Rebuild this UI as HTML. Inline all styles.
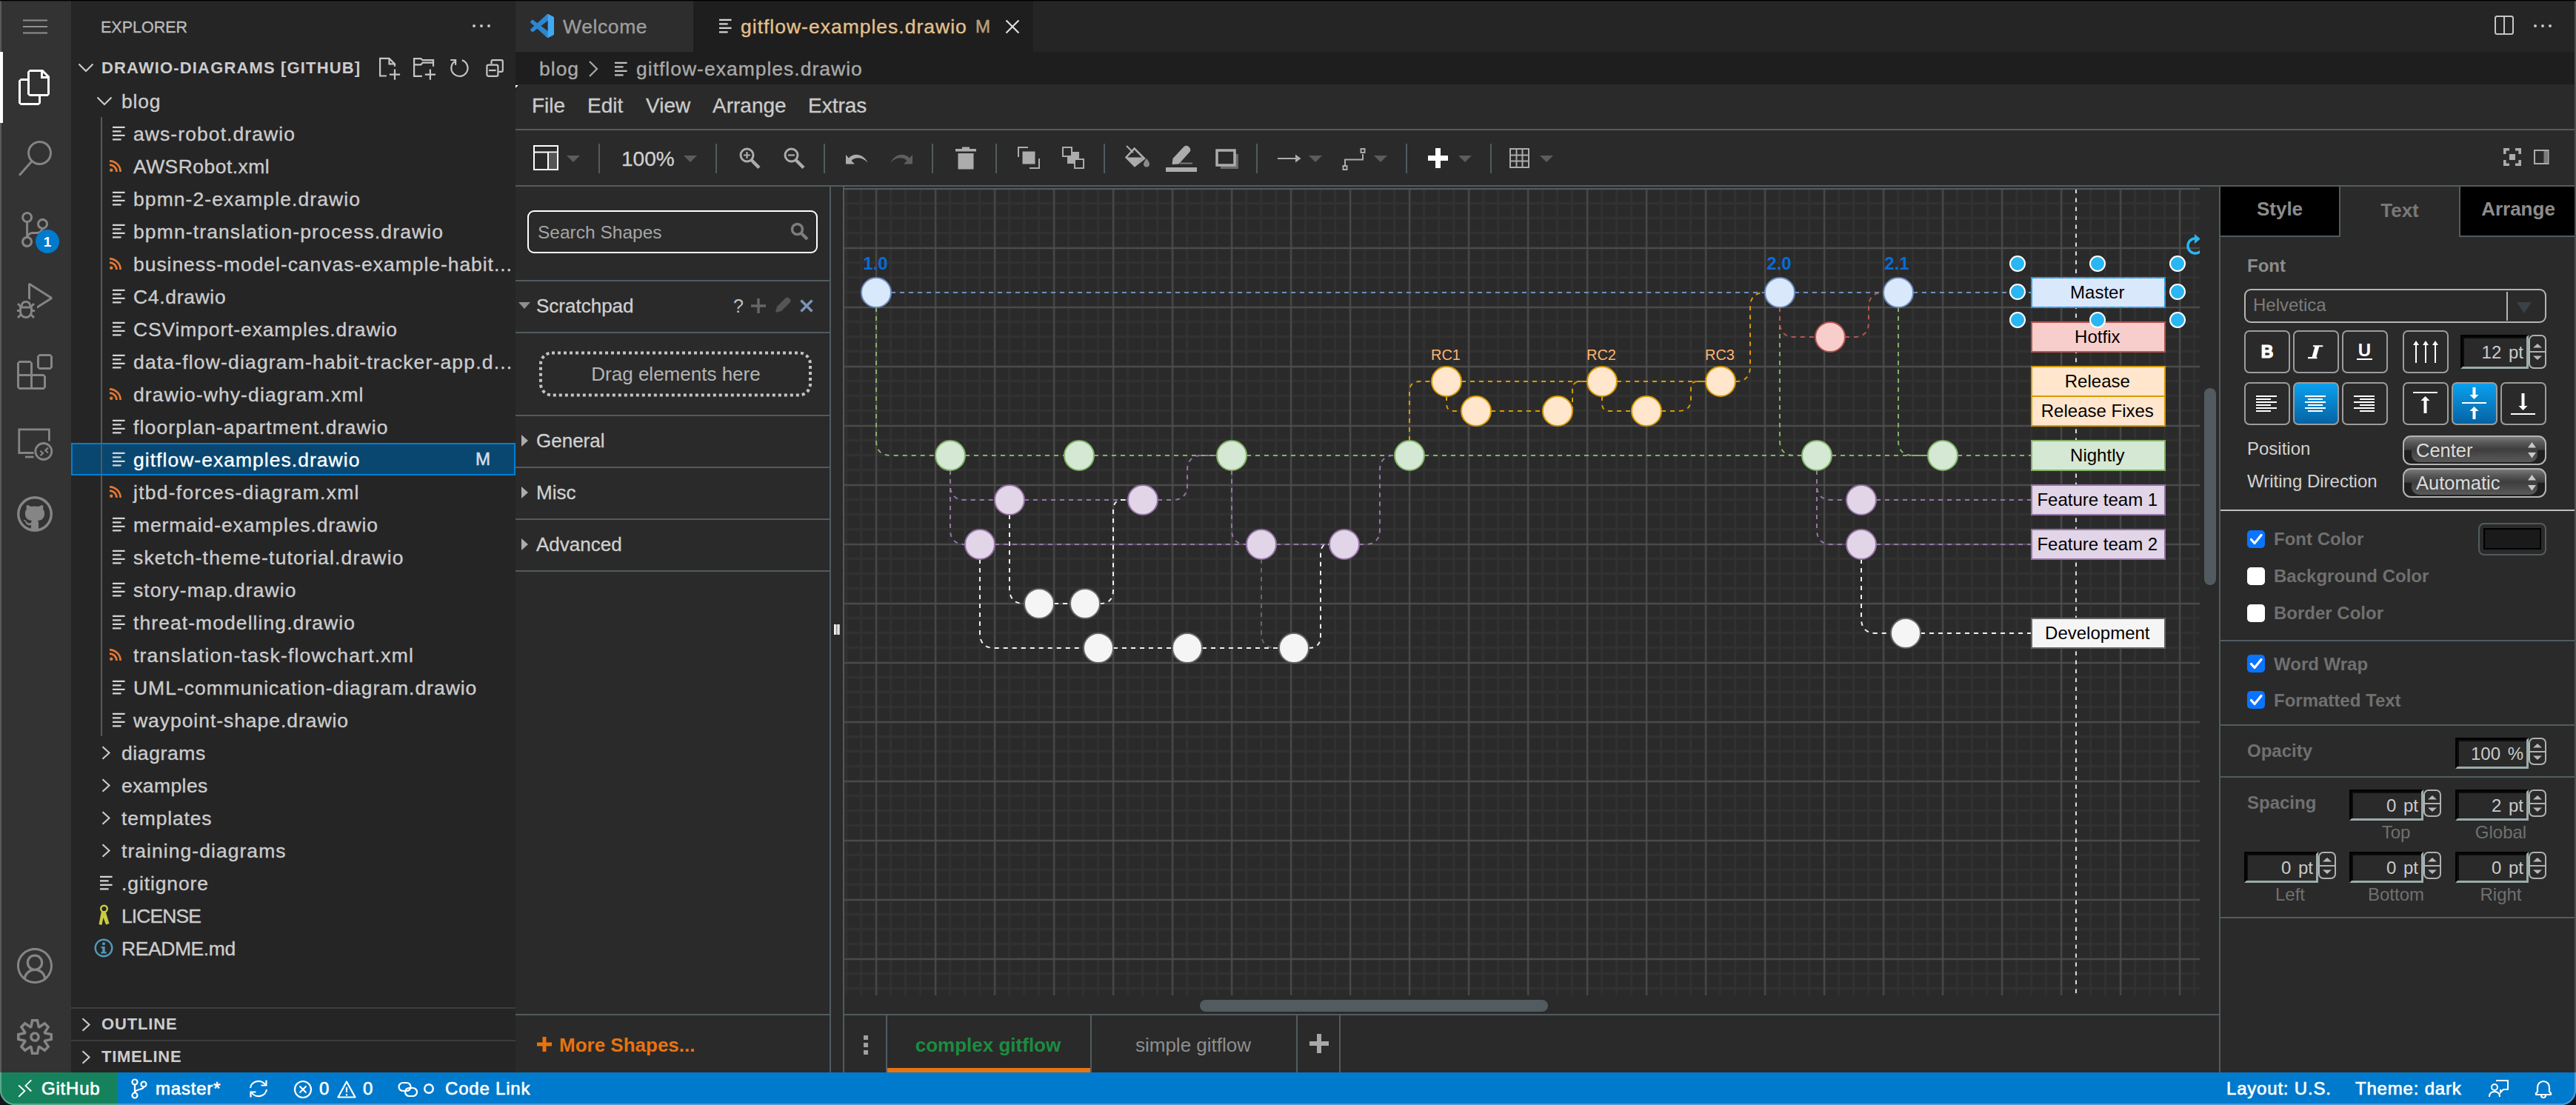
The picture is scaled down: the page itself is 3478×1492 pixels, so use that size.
<!DOCTYPE html><html><head><meta charset="utf-8"><title>drawio-diagrams</title><style>
*{box-sizing:border-box;margin:0;padding:0}
html,body{width:3478px;height:1492px;overflow:hidden;background:#1e1e1e}
body{font-family:"Liberation Sans",sans-serif;position:relative;color:#ccc}
.a{position:absolute}
.t{position:absolute;white-space:pre;line-height:1}
svg{position:absolute;overflow:visible}
/* vscode */
#act{left:0;top:0;width:96px;height:1448px;background:#333333}
#side{left:96px;top:0;width:600px;height:1448px;background:#252526}
#tabs{left:696px;top:0;width:2782px;height:70px;background:#252526}
#bc{left:696px;top:70px;width:2782px;height:44px;background:#1e1e1e}
#dio{left:696px;top:114px;width:2782px;height:1334px;background:#2a2a2a}
#status{left:0;top:1448px;width:3478px;height:44px;background:#007acc}
.row{position:absolute;left:96px;width:600px;height:44px}
.fn{position:absolute;white-space:pre;font-size:26.5px;letter-spacing:1px;color:#cccccc;line-height:44px;top:0;-webkit-text-stroke:0.35px}
.vs{-webkit-text-stroke:0.35px}
.hl{position:absolute;background:#4a5458}
.fl{position:absolute;white-space:pre;line-height:1;font-size:24px;font-weight:700;color:#8c8c8c}
.inp{position:absolute;background:#2a2a2a;border:3px solid #000;border-top-color:#020202;border-left-color:#020202;border-bottom-color:#9aabab;border-right-color:#9aabab;box-shadow:inset 2px 2px 0 #0c0c0c;color:#cacaca;font-size:24px;line-height:41px;text-align:right;padding-right:4px;white-space:pre}
.spin{position:absolute;border:2px solid #b0b0b0;border-radius:7px;background:#2a2a2a}
.btn{position:absolute;border:2px solid #9c9c9c;border-radius:7px;background:#2a2a2a}
.btn.on{background:linear-gradient(#0aa0ee,#0563a3)}
.sel{position:absolute;border:2px solid #b4b4b4;border-radius:11px;background:linear-gradient(#7a7a7a 0%,#5a5a5a 20%,#3c3c3c 48%,#1e1e1e 50%,#202020 100%);color:#dcdcdc;font-size:25.5px;line-height:36px;padding-left:16px;white-space:pre;overflow:hidden}
.sel:before{content:"";position:absolute;left:10px;right:10px;top:17px;height:17px;border-radius:0 0 10px 10px;background:linear-gradient(#3e3e3e,#5a5a5a)}
.sel span{position:relative}
.cb{position:absolute;width:24px;height:24px;border-radius:5px}
.cb.on{background:#0a74ff}
.cb.off{background:#fff}
</style></head><body>
<div class="a" id="act"></div><div class="a" id="side"></div><div class="a" id="tabs"></div><div class="a" id="bc"></div><div class="a" id="dio"></div><div class="a" id="status"></div>
<div class="a" style="left:0;top:0;width:2px;height:1492px;background:#5a5a5a"></div>
<svg style="left:31px;top:26px" width="34" height="20"><path d="M0 1.5H33M0 10H33M0 18.5H33" stroke="#909090" stroke-width="2"/></svg>
<div class="a" style="left:0;top:70px;width:4px;height:96px;background:#fff"></div>
<svg style="left:22.7px;top:94.0px" width="48" height="48" viewBox="0 0 24 24"><path d="M17.5 0h-9L7 1.5V6H2.5L1 7.5v15.07L2.5 24h12.07L16 22.57V18h4.7l1.3-1.43V4.5L17.5 0zm0 2.12l2.38 2.38H17.5V2.12zm-3 20.38h-12v-15H7v9.07L8.5 18h6v4.5zm6-6h-12v-15H16V6h4.5v10.5z" fill="#ffffff"/></svg>
<svg style="left:22.7px;top:190.0px" width="48" height="48" viewBox="0 0 24 24"><path d="M15.25 0a8.25 8.25 0 0 0-6.18 13.72L1 22.88l1.12 1 8.05-9.12A8.251 8.251 0 1 0 15.25.01V0zm0 15a6.75 6.75 0 1 1 0-13.5 6.75 6.75 0 0 1 0 13.5z" fill="#858585"/></svg>
<svg style="left:22.7px;top:286.0px" width="48" height="48" viewBox="0 0 24 24"><path d="M21.007 8.222A3.738 3.738 0 0 0 15.045 5.2a3.737 3.737 0 0 0 1.156 6.583 2.988 2.988 0 0 1-2.668 1.67h-2.99a4.456 4.456 0 0 0-2.989 1.165V7.4a3.737 3.737 0 1 0-1.494 0v9.117a3.776 3.776 0 1 0 1.816.099 2.99 2.99 0 0 1 2.668-1.667h2.99a4.484 4.484 0 0 0 4.223-3.039 3.736 3.736 0 0 0 3.25-3.687zM4.565 3.738a2.242 2.242 0 1 1 4.484 0 2.242 2.242 0 0 1-4.484 0zm4.484 16.441a2.242 2.242 0 1 1-4.484 0 2.242 2.242 0 0 1 4.484 0zm8.221-9.715a2.242 2.242 0 1 1 0-4.485 2.242 2.242 0 0 1 0 4.485z" fill="#858585"/></svg>
<svg style="left:22.7px;top:382.0px" width="48" height="48" viewBox="0 0 24 24"><path d="M10.94 13.5l-1.32 1.32a3.73 3.73 0 0 0-7.24 0L1.06 13.5 0 14.56l1.72 1.72-.22.22V18H0v1.5h1.5v.08c.077.489.214.966.41 1.42L0 22.94 1.06 24l1.65-1.65A4.308 4.308 0 0 0 6 24a4.31 4.31 0 0 0 3.29-1.65L10.94 24 12 22.94 10.09 21c.198-.464.336-.951.41-1.45v-.1H12V18h-1.5v-1.5l-.22-.22L12 14.56l-1.06-1.06zM6 13.5a2.25 2.25 0 0 1 2.25 2.25h-4.5A2.25 2.25 0 0 1 6 13.5zm3 6a3.33 3.33 0 0 1-3 3 3.33 3.33 0 0 1-3-3v-2.25h6v2.25zm14.76-9.9v1.26L13.5 17.37V15.6l8.5-5.37L9 2v9.46a5.07 5.07 0 0 0-1.5-.72V.63L8.64 0l15.12 9.6z" fill="#858585"/></svg>
<svg style="left:22.7px;top:478.0px" width="48" height="48" viewBox="0 0 24 24"><path d="M13.5 1.5L15 0h7.5L24 1.5V9l-1.5 1.5H15L13.5 9V1.5zm1.5 0V9h7.5V1.5H15zM0 15V6l1.5-1.5H9L10.5 6v7.5H18l1.5 1.5v7.5L18 24H1.5L0 22.5V15zm9-1.5V6H1.5v7.5H9zM9 15H1.5v7.5H9V15zm1.5 7.5H18V15h-7.5v7.5z" fill="#858585"/></svg>
<svg style="left:22.700px;top:574px" width="48" height="48" viewBox="0 0 48 48" fill="none" stroke="#858585" stroke-width="2.800"><path d="M22.500 37.500H2.800V5.800H43.400V21.500"/><path d="M11 43H22.500"/><circle cx="35.800" cy="35.500" r="11"/><path d="M31.500 34.800L35 38L31.500 41.200M42 30.600L38.200 34L42 37.400" stroke-width="2.200"/></svg>
<svg style="left:22.7px;top:670.0px" width="48" height="48" viewBox="0 0 24 24"><path d="M12 0a12 12 0 1 0 0 24 12 12 0 0 0 0-24zm3.163 21.783h-.093a.513.513 0 0 1-.382-.14.513.513 0 0 1-.14-.372v-1.406c.006-.467.01-.94.01-1.416a3.693 3.693 0 0 0-.151-1.028 1.832 1.832 0 0 0-.542-.875 8.014 8.014 0 0 0 2.038-.471 4.051 4.051 0 0 0 1.466-.964c.407-.427.71-.943.885-1.506a6.77 6.77 0 0 0 .3-2.13 4.138 4.138 0 0 0-.26-1.476 3.892 3.892 0 0 0-.795-1.284 2.81 2.81 0 0 0 .162-.582c.033-.2.05-.402.05-.604 0-.26-.03-.52-.09-.773a5.309 5.309 0 0 0-.221-.763.293.293 0 0 0-.111-.02h-.11c-.23.002-.456.04-.674.111a5.34 5.34 0 0 0-.703.26 6.503 6.503 0 0 0-.661.343c-.215.127-.405.249-.573.362a9.578 9.578 0 0 0-5.143 0 13.507 13.507 0 0 0-.572-.362 6.022 6.022 0 0 0-.672-.342 4.516 4.516 0 0 0-.705-.261 2.203 2.203 0 0 0-.662-.111h-.11a.29.29 0 0 0-.11.02 5.844 5.844 0 0 0-.23.763c-.054.254-.08.513-.081.773 0 .202.017.404.051.604.033.199.086.394.16.582A3.888 3.888 0 0 0 5.702 10a4.142 4.142 0 0 0-.263 1.476 6.871 6.871 0 0 0 .292 2.12c.181.563.483 1.08.884 1.516.415.422.915.75 1.466.964.653.25 1.337.41 2.033.476a1.828 1.828 0 0 0-.452.633 2.99 2.99 0 0 0-.2.744 2.754 2.754 0 0 1-1.175.27 1.788 1.788 0 0 1-1.065-.3 2.904 2.904 0 0 1-.752-.824 3.1 3.1 0 0 0-.292-.382 2.693 2.693 0 0 0-.372-.343 1.841 1.841 0 0 0-.432-.24 1.2 1.2 0 0 0-.481-.101c-.04.001-.08.005-.12.01a.649.649 0 0 0-.162.02.408.408 0 0 0-.13.06.116.116 0 0 0-.06.1.33.33 0 0 0 .14.242c.093.074.17.131.232.171l.03.021c.133.103.261.214.382.333.112.098.213.209.3.33.09.119.168.246.231.381.073.134.15.288.231.463.188.474.522.875.954 1.145.453.243.961.364 1.476.351.174 0 .349-.01.522-.03.172-.028.343-.057.515-.091v1.743a.5.5 0 0 1-.533.521h-.062a10.286 10.286 0 1 1 6.324 0v.005z" fill="#858585"/></svg>
<svg style="left:22.7px;top:1280.0px" width="48" height="48" viewBox="0 0 16 16"><path d="M16 7.992C16 3.58 12.416 0 8 0S0 3.58 0 7.992c0 2.43 1.104 4.62 2.832 6.09.016.016.032.016.032.032.144.112.288.224.448.336.08.048.144.111.224.175A7.98 7.98 0 0 0 8.016 16a7.98 7.98 0 0 0 4.48-1.375c.08-.048.144-.111.224-.16.144-.111.304-.223.448-.335.016-.016.032-.016.032-.032 1.696-1.487 2.8-3.676 2.8-6.106zm-8 7.001c-1.504 0-2.88-.48-4.016-1.279.016-.128.048-.255.08-.383a4.17 4.17 0 0 1 .416-.991c.176-.304.384-.576.64-.816.24-.24.528-.463.816-.639.304-.176.624-.304.976-.4A4.15 4.15 0 0 1 8 10.342a4.185 4.185 0 0 1 2.928 1.166c.368.368.656.8.864 1.295.112.288.192.592.24.911A7.03 7.03 0 0 1 8 14.993zm-2.448-7.4a2.49 2.49 0 0 1-.208-1.024c0-.351.064-.703.208-1.023.144-.32.336-.607.576-.847.24-.24.528-.431.848-.575.32-.144.672-.208 1.024-.208.368 0 .704.064 1.024.208.32.144.608.336.848.575.24.24.432.528.576.847.144.32.208.672.208 1.023 0 .368-.064.704-.208 1.023a2.84 2.84 0 0 1-.576.848 2.84 2.84 0 0 1-.848.575 2.715 2.715 0 0 1-2.064 0 2.84 2.84 0 0 1-.848-.575 2.526 2.526 0 0 1-.56-.848zm7.424 5.306c0-.032-.016-.048-.016-.08a5.22 5.22 0 0 0-.688-1.406 4.883 4.883 0 0 0-1.088-1.135 5.207 5.207 0 0 0-1.04-.608 2.82 2.82 0 0 0 .464-.383 4.2 4.2 0 0 0 .624-.784 3.624 3.624 0 0 0 .528-1.934 3.71 3.71 0 0 0-.288-1.47 3.799 3.799 0 0 0-.816-1.199 3.845 3.845 0 0 0-1.2-.8 3.72 3.72 0 0 0-1.472-.287 3.72 3.72 0 0 0-1.472.288 3.631 3.631 0 0 0-1.2.815 3.84 3.84 0 0 0-.8 1.199 3.71 3.71 0 0 0-.288 1.47c0 .352.048.688.144 1.007.096.336.224.64.4.927.16.288.384.544.624.784.144.144.304.271.48.383a5.12 5.12 0 0 0-1.04.624c-.416.32-.784.703-1.088 1.119a4.999 4.999 0 0 0-.688 1.406c-.016.032-.016.064-.016.08C1.776 11.636.992 9.91.992 7.992.992 4.14 4.144.991 8 .991s7.008 3.149 7.008 7.001a6.96 6.96 0 0 1-2.032 4.907z" fill="#858585"/></svg>
<svg style="left:22.7px;top:1376.0px" width="48" height="48" viewBox="0 0 24 24"><path d="M19.85 8.75l4.15.83v4.84l-4.15.83 2.35 3.52-3.43 3.43-3.52-2.35-.83 4.15H9.58l-.83-4.15-3.52 2.35-3.43-3.43 2.35-3.52L0 14.42V9.58l4.15-.83L1.8 5.23 5.23 1.8l3.52 2.35L9.58 0h4.84l.83 4.15 3.52-2.35 3.43 3.43-2.35 3.52zm-1.57 5.07l4-.81v-2l-4-.81-.54-1.3 2.29-3.43-1.43-1.43-3.43 2.29-1.3-.54-.81-4h-2l-.81 4-1.3.54-3.43-2.29-1.43 1.43L6.38 8.9l-.54 1.3-4 .81v2l4 .81.54 1.3-2.29 3.43 1.43 1.43 3.43-2.29 1.3.54.81 4h2l.81-4 1.3-.54 3.43 2.29 1.43-1.43-2.29-3.43.54-1.3zm-8.186-4.672A3.43 3.43 0 0 1 12 8.57 3.44 3.44 0 0 1 15.43 12a3.43 3.43 0 1 1-5.336-2.852zm.956 4.274c.281.188.612.288.95.288A1.7 1.7 0 0 0 13.71 12a1.71 1.71 0 1 0-2.66 1.422z" fill="#858585"/></svg>
<div class="a" style="left:48px;top:310px;width:32px;height:32px;border-radius:16px;background:#007acc"></div>
<div class="t" style="left:48px;top:317px;width:32px;text-align:center;font-size:19px;font-weight:700;color:#fff">1</div>
<div class="t vs" style="left:136px;top:26.500px;font-size:21.500px;color:#bbbbbb;letter-spacing:0px">EXPLORER</div>
<svg style="left:637px;top:32px" width="26" height="6"><circle cx="3" cy="3" r="2" fill="#c5c5c5"/><circle cx="13" cy="3" r="2" fill="#c5c5c5"/><circle cx="23" cy="3" r="2" fill="#c5c5c5"/></svg>
<svg style="left:105px;top:85px" width="22" height="13" viewBox="0 0 22 13"><path d="M1.500 1.500L11 11L20.500 1.500" stroke="#cccccc" stroke-width="2.100" fill="none"/></svg>
<div class="t" style="left:137px;top:81px;font-size:22px;font-weight:700;color:#cccccc;letter-spacing:1.15px">DRAWIO-DIAGRAMS [GITHUB]</div>
<svg style="left:511px;top:76px" width="32" height="34" fill="none" stroke="#c5c5c5" stroke-width="2.200"><path d="M10.800 26.500H2.100V2.900H14.500L22 10.400V13.700"/><path d="M14.500 2.900V10.400H22"/><path d="M22 17.600V31.800M14.900 24.700H29.100"/></svg>
<svg style="left:557px;top:76px" width="34" height="34" fill="none" stroke="#c5c5c5" stroke-width="2.200"><path d="M12.900 26.900H2.100V3.200H11.200L13.600 5.100H28V13.700"/><path d="M2.100 11.400H11.200L13.600 8.700H27"/><path d="M23.900 17.600V31.800M16.800 24.700H31"/></svg>
<svg style="left:606px;top:76px" width="30" height="32" fill="none" stroke="#c5c5c5" stroke-width="2.200"><path d="M17.800 5.300A11.100 11.100 0 1 1 8 6.800"/><path d="M2.200 5H9.100V11.700"/></svg>
<svg style="left:654px;top:78px" width="28" height="28" fill="none" stroke="#c5c5c5" stroke-width="2.200"><path d="M9.500 8.500V5Q9.500 3.100 11.400 3.100H22.900Q24.800 3.100 24.800 5V16.900Q24.800 18.800 22.900 18.800H19.400"/><rect x="3.400" y="9.600" width="15" height="15.300" rx="2.200"/><path d="M6 17H15.700"/></svg>
<svg style="left:130px;top:130px" width="22" height="13" viewBox="0 0 22 13"><path d="M1.500 1.500L11 11L20.500 1.500" stroke="#cccccc" stroke-width="2.100" fill="none"/></svg>
<div class="fn" style="left:164px;top:115px;color:#cccccc;letter-spacing:0.83px">blog</div>
<div class="a" style="left:136px;top:158px;width:2px;height:836px;background:#585858"></div>
<svg style="left:151.5px;top:170px" width="18" height="20" viewBox="0 0 18 20"><path d="M0 1.800H16.600M0 7.300H11.600M0 12.800H16.600M0 18.300H11.600" stroke="#d4d4d4" stroke-width="2.200" fill="none"/></svg>
<div class="fn" style="left:180px;top:159px;color:#cccccc;letter-spacing:1.08px">aws-robot.drawio</div>
<svg style="left:148px;top:216px" width="16" height="16" viewBox="0 0 20 20"><circle cx="2.8" cy="17.2" r="2.8" fill="#e37933"/><path d="M0 8.2A11.8 11.8 0 0 1 11.8 20" stroke="#e37933" stroke-width="3.4" fill="none"/><path d="M0 1.7A18.3 18.3 0 0 1 18.3 20" stroke="#e37933" stroke-width="3.4" fill="none"/></svg>
<div class="fn" style="left:180px;top:203px;color:#cccccc;letter-spacing:0.46px">AWSRobot.xml</div>
<svg style="left:151.5px;top:258px" width="18" height="20" viewBox="0 0 18 20"><path d="M0 1.800H16.600M0 7.300H11.600M0 12.800H16.600M0 18.300H11.600" stroke="#d4d4d4" stroke-width="2.200" fill="none"/></svg>
<div class="fn" style="left:180px;top:247px;color:#cccccc;letter-spacing:1.08px">bpmn-2-example.drawio</div>
<svg style="left:151.5px;top:302px" width="18" height="20" viewBox="0 0 18 20"><path d="M0 1.800H16.600M0 7.300H11.600M0 12.800H16.600M0 18.300H11.600" stroke="#d4d4d4" stroke-width="2.200" fill="none"/></svg>
<div class="fn" style="left:180px;top:291px;color:#cccccc;letter-spacing:1.12px">bpmn-translation-process.drawio</div>
<svg style="left:148px;top:348px" width="16" height="16" viewBox="0 0 20 20"><circle cx="2.8" cy="17.2" r="2.8" fill="#e37933"/><path d="M0 8.2A11.8 11.8 0 0 1 11.8 20" stroke="#e37933" stroke-width="3.4" fill="none"/><path d="M0 1.7A18.3 18.3 0 0 1 18.3 20" stroke="#e37933" stroke-width="3.4" fill="none"/></svg>
<div class="fn" style="left:180px;top:335px;color:#cccccc;letter-spacing:0.95px">business-model-canvas-example-habit...</div>
<svg style="left:151.5px;top:390px" width="18" height="20" viewBox="0 0 18 20"><path d="M0 1.800H16.600M0 7.300H11.600M0 12.800H16.600M0 18.300H11.600" stroke="#d4d4d4" stroke-width="2.200" fill="none"/></svg>
<div class="fn" style="left:180px;top:379px;color:#cccccc;letter-spacing:0.67px">C4.drawio</div>
<svg style="left:151.5px;top:434px" width="18" height="20" viewBox="0 0 18 20"><path d="M0 1.800H16.600M0 7.300H11.600M0 12.800H16.600M0 18.300H11.600" stroke="#d4d4d4" stroke-width="2.200" fill="none"/></svg>
<div class="fn" style="left:180px;top:423px;color:#cccccc;letter-spacing:0.86px">CSVimport-examples.drawio</div>
<svg style="left:151.5px;top:478px" width="18" height="20" viewBox="0 0 18 20"><path d="M0 1.800H16.600M0 7.300H11.600M0 12.800H16.600M0 18.300H11.600" stroke="#d4d4d4" stroke-width="2.200" fill="none"/></svg>
<div class="fn" style="left:180px;top:467px;color:#cccccc;letter-spacing:1.17px">data<i></i>-flow-diagram-habit-tracker-app.d...</div>
<svg style="left:148px;top:524px" width="16" height="16" viewBox="0 0 20 20"><circle cx="2.8" cy="17.2" r="2.8" fill="#e37933"/><path d="M0 8.2A11.8 11.8 0 0 1 11.8 20" stroke="#e37933" stroke-width="3.4" fill="none"/><path d="M0 1.7A18.3 18.3 0 0 1 18.3 20" stroke="#e37933" stroke-width="3.4" fill="none"/></svg>
<div class="fn" style="left:180px;top:511px;color:#cccccc;letter-spacing:1.11px">drawio-why-diagram.xml</div>
<svg style="left:151.5px;top:566px" width="18" height="20" viewBox="0 0 18 20"><path d="M0 1.800H16.600M0 7.300H11.600M0 12.800H16.600M0 18.300H11.600" stroke="#d4d4d4" stroke-width="2.200" fill="none"/></svg>
<div class="fn" style="left:180px;top:555px;color:#cccccc;letter-spacing:1.13px">floorplan-apartment.drawio</div>
<div class="a" style="left:96px;top:598px;width:600px;height:44px;background:#094771;border:2px solid #007fd4"></div>
<div class="a" style="left:136px;top:600px;width:2px;height:40px;background:#585858"></div>
<svg style="left:151.5px;top:610px" width="18" height="20" viewBox="0 0 18 20"><path d="M0 1.800H16.600M0 7.300H11.600M0 12.800H16.600M0 18.300H11.600" stroke="#d4d4d4" stroke-width="2.200" fill="none"/></svg>
<div class="fn" style="left:180px;top:599px;color:#ffffff;letter-spacing:1.03px">gitflow-examples.drawio</div>
<div class="fn" style="left:642px;top:598px;color:#d4dce6;font-size:24px;letter-spacing:0;-webkit-text-stroke:0.600px">M</div>
<svg style="left:148px;top:656px" width="16" height="16" viewBox="0 0 20 20"><circle cx="2.8" cy="17.2" r="2.8" fill="#e37933"/><path d="M0 8.2A11.8 11.8 0 0 1 11.8 20" stroke="#e37933" stroke-width="3.4" fill="none"/><path d="M0 1.7A18.3 18.3 0 0 1 18.3 20" stroke="#e37933" stroke-width="3.4" fill="none"/></svg>
<div class="fn" style="left:180px;top:643px;color:#cccccc;letter-spacing:1.25px">jtbd-forces-diagram.xml</div>
<svg style="left:151.5px;top:698px" width="18" height="20" viewBox="0 0 18 20"><path d="M0 1.800H16.600M0 7.300H11.600M0 12.800H16.600M0 18.300H11.600" stroke="#d4d4d4" stroke-width="2.200" fill="none"/></svg>
<div class="fn" style="left:180px;top:687px;color:#cccccc;letter-spacing:0.88px">mermaid-examples.drawio</div>
<svg style="left:151.5px;top:742px" width="18" height="20" viewBox="0 0 18 20"><path d="M0 1.800H16.600M0 7.300H11.600M0 12.800H16.600M0 18.300H11.600" stroke="#d4d4d4" stroke-width="2.200" fill="none"/></svg>
<div class="fn" style="left:180px;top:731px;color:#cccccc;letter-spacing:1.17px">sketch-theme-tutorial.drawio</div>
<svg style="left:151.5px;top:786px" width="18" height="20" viewBox="0 0 18 20"><path d="M0 1.800H16.600M0 7.300H11.600M0 12.800H16.600M0 18.300H11.600" stroke="#d4d4d4" stroke-width="2.200" fill="none"/></svg>
<div class="fn" style="left:180px;top:775px;color:#cccccc;letter-spacing:1.08px">story-map.drawio</div>
<svg style="left:151.5px;top:830px" width="18" height="20" viewBox="0 0 18 20"><path d="M0 1.800H16.600M0 7.300H11.600M0 12.800H16.600M0 18.300H11.600" stroke="#d4d4d4" stroke-width="2.200" fill="none"/></svg>
<div class="fn" style="left:180px;top:819px;color:#cccccc;letter-spacing:1.07px">threat-modelling.drawio</div>
<svg style="left:148px;top:876px" width="16" height="16" viewBox="0 0 20 20"><circle cx="2.8" cy="17.2" r="2.8" fill="#e37933"/><path d="M0 8.2A11.8 11.8 0 0 1 11.8 20" stroke="#e37933" stroke-width="3.4" fill="none"/><path d="M0 1.7A18.3 18.3 0 0 1 18.3 20" stroke="#e37933" stroke-width="3.4" fill="none"/></svg>
<div class="fn" style="left:180px;top:863px;color:#cccccc;letter-spacing:1.2px">translation-task-flowchart.xml</div>
<svg style="left:151.5px;top:918px" width="18" height="20" viewBox="0 0 18 20"><path d="M0 1.800H16.600M0 7.300H11.600M0 12.800H16.600M0 18.300H11.600" stroke="#d4d4d4" stroke-width="2.200" fill="none"/></svg>
<div class="fn" style="left:180px;top:907px;color:#cccccc;letter-spacing:0.98px">UML-communication-diagram.drawio</div>
<svg style="left:151.5px;top:962px" width="18" height="20" viewBox="0 0 18 20"><path d="M0 1.800H16.600M0 7.300H11.600M0 12.800H16.600M0 18.300H11.600" stroke="#d4d4d4" stroke-width="2.200" fill="none"/></svg>
<div class="fn" style="left:180px;top:951px;color:#cccccc;letter-spacing:0.95px">waypoint-shape.drawio</div>
<svg style="left:137px;top:1006.5px" width="13" height="19" viewBox="0 0 13 19"><path d="M1.500 1.200L10.500 9.500L1.500 17.800" stroke="#cccccc" stroke-width="2.100" fill="none"/></svg>
<div class="fn" style="left:164px;top:995px;color:#cccccc;letter-spacing:0.6px">diagrams</div>
<svg style="left:137px;top:1050.5px" width="13" height="19" viewBox="0 0 13 19"><path d="M1.500 1.200L10.500 9.500L1.500 17.800" stroke="#cccccc" stroke-width="2.100" fill="none"/></svg>
<div class="fn" style="left:164px;top:1039px;color:#cccccc;letter-spacing:0.41px">examples</div>
<svg style="left:137px;top:1094.5px" width="13" height="19" viewBox="0 0 13 19"><path d="M1.500 1.200L10.500 9.500L1.500 17.800" stroke="#cccccc" stroke-width="2.100" fill="none"/></svg>
<div class="fn" style="left:164px;top:1083px;color:#cccccc;letter-spacing:0.84px">templates</div>
<svg style="left:137px;top:1138.5px" width="13" height="19" viewBox="0 0 13 19"><path d="M1.500 1.200L10.500 9.500L1.500 17.800" stroke="#cccccc" stroke-width="2.100" fill="none"/></svg>
<div class="fn" style="left:164px;top:1127px;color:#cccccc;letter-spacing:1.05px">training-diagrams</div>
<svg style="left:134.5px;top:1182px" width="18" height="20" viewBox="0 0 18 20"><path d="M0 1.800H16.600M0 7.300H11.600M0 12.800H16.600M0 18.300H11.600" stroke="#d4d4d4" stroke-width="2.200" fill="none"/></svg>
<div class="fn" style="left:164px;top:1171px;color:#cccccc;letter-spacing:0.89px">.gitignore</div>
<svg style="left:130px;top:1221px" width="20" height="30" viewBox="0 0 20 30"><circle cx="10.500" cy="6" r="4.300" fill="none" stroke="#cbcb41" stroke-width="2.400"/><path d="M7 9L3.500 27L7.500 28L9.500 18L13 27.500L17.500 26L12.500 9.500Z" fill="#cbcb41"/></svg>
<div class="fn" style="left:164px;top:1215px;color:#cccccc;letter-spacing:-0.91px">LICENSE</div>
<svg style="left:127px;top:1267px" width="26" height="26" viewBox="0 0 26 26"><circle cx="13" cy="13" r="11.3" fill="none" stroke="#519aba" stroke-width="2.4"/><rect x="11.3" y="11" width="3.4" height="9" fill="#519aba"/><rect x="9.5" y="11" width="4" height="2.2" fill="#519aba"/><rect x="9.3" y="18.3" width="7.4" height="2.2" fill="#519aba"/><circle cx="13" cy="7.2" r="2" fill="#519aba"/></svg>
<div class="fn" style="left:164px;top:1259px;color:#cccccc;letter-spacing:-0.42px">README.md</div>
<div class="a" style="left:96px;top:1360px;width:600px;height:2px;background:#3c3c3c"></div>
<div class="a" style="left:96px;top:1404px;width:600px;height:2px;background:#3c3c3c"></div>
<svg style="left:110px;top:1373.5px" width="13" height="19" viewBox="0 0 13 19"><path d="M1.500 1.200L10.500 9.500L1.500 17.800" stroke="#cccccc" stroke-width="2.100" fill="none"/></svg>
<div class="t" style="left:137px;top:1372px;font-size:22px;font-weight:700;color:#cccccc;letter-spacing:0.85px">OUTLINE</div>
<svg style="left:110px;top:1417.5px" width="13" height="19" viewBox="0 0 13 19"><path d="M1.500 1.200L10.500 9.500L1.500 17.800" stroke="#cccccc" stroke-width="2.100" fill="none"/></svg>
<div class="t" style="left:137px;top:1416px;font-size:22px;font-weight:700;color:#cccccc;letter-spacing:0.7px">TIMELINE</div>
<div class="a" style="left:696px;top:0;width:240px;height:70px;background:#2d2d2d"></div>
<div class="a" style="left:936px;top:0;width:459px;height:70px;background:#1e1e1e"></div>
<svg style="left:716px;top:19px" width="32" height="32" viewBox="0 0 100 100"><path d="M96.5 10.8L75.9.9a6.2 6.2 0 0 0-7.1 1.2L29.4 38 12.2 25a4.2 4.2 0 0 0-5.3.2L1.400 30.200a4.200 4.200 0 0 0 0 6.200L16.300 50 1.400 63.600a4.200 4.200 0 0 0 0 6.200l5.500 5a4.200 4.200 0 0 0 5.300.2l17.200-13 39.400 36a6.200 6.200 0 0 0 7.100 1.200l20.600-9.900a6.200 6.200 0 0 0 3.500-5.600V16.400a6.200 6.200 0 0 0-3.500-5.600zM75 72.700L45.100 50 75 27.300z" fill="#2c86d0"/><path d="M96.500 10.800L75.900.9a6.200 6.200 0 0 0-7.100 1.200c1.900-1.900 5.200-.6 5.200 2.200V95.700c0 2.800-3.300 4.100-5.200 2.200a6.200 6.200 0 0 0 7.100 1.200l20.600-9.900a6.200 6.200 0 0 0 3.500-5.600V16.400a6.200 6.200 0 0 0-3.500-5.600z" fill="#41a8f2"/><path d="M1.400 30.200a4.200 4.200 0 0 0 0 6.200L68.800 97.900c1.900 1.900 5.200.6 5.200-2.200V72L12.200 25a4.200 4.200 0 0 0-5.300.2z" fill="#1070b3" opacity=".0"/></svg>
<div class="t vs" style="left:760px;top:23px;font-size:26.5px;letter-spacing:0.6px;color:#9d9d9d">Welcome</div>
<svg style="left:970.5px;top:25px" width="18" height="20" viewBox="0 0 18 20"><path d="M0 1.800H16.600M0 7.300H11.600M0 12.800H16.600M0 18.300H11.600" stroke="#d4d4d4" stroke-width="2.200" fill="none"/></svg>
<div class="t vs" style="left:1000px;top:23px;font-size:26.5px;letter-spacing:1px;color:#e2c08d">gitflow-examples.drawio</div>
<div class="t" style="left:1317px;top:24px;font-size:24px;color:#b89e78;-webkit-text-stroke:0.600px">M</div>
<svg style="left:1357px;top:26px" width="20" height="20"><path d="M1.500 1.500L18.500 18.500M18.500 1.500L1.500 18.500" stroke="#e0e0e0" stroke-width="2.200"/></svg>
<svg style="left:3368px;top:21px" width="26" height="26" fill="none" stroke="#c5c5c5" stroke-width="2"><rect x="1" y="1" width="24" height="24" rx="2.5"/><path d="M13 1V25"/></svg>
<svg style="left:3420px;top:32px" width="26" height="6"><circle cx="3" cy="3" r="2" fill="#c5c5c5"/><circle cx="13" cy="3" r="2" fill="#c5c5c5"/><circle cx="23" cy="3" r="2" fill="#c5c5c5"/></svg>
<div class="t vs" style="left:728px;top:80px;font-size:26.5px;letter-spacing:1px;color:#a9a9a9">blog</div>
<svg style="left:794px;top:81px" width="14" height="24"><path d="M2 2L12 12L2 22" stroke="#a9a9a9" stroke-width="2.200" fill="none"/></svg>
<svg style="left:829.5px;top:83px" width="18" height="20" viewBox="0 0 18 20"><path d="M0 1.800H16.600M0 7.300H11.600M0 12.800H16.600M0 18.300H11.600" stroke="#c0c0c0" stroke-width="2.200" fill="none"/></svg>
<div class="t vs" style="left:859px;top:80px;font-size:26.5px;letter-spacing:1px;color:#a9a9a9">gitflow-examples.drawio</div>
<svg style="left:696px;top:114px" width="6" height="6"><path d="M0 1H5L0 6Z" fill="#000"/><path d="M0 1H4L0 5Z" fill="#fff"/></svg>
<div class="t" style="left:718px;top:128.500px;font-size:28px;color:#cbcbcb;-webkit-text-stroke:0.3px">File</div>
<div class="t" style="left:793px;top:128.500px;font-size:28px;color:#cbcbcb;-webkit-text-stroke:0.3px">Edit</div>
<div class="t" style="left:872px;top:128.500px;font-size:28px;color:#cbcbcb;-webkit-text-stroke:0.3px">View</div>
<div class="t" style="left:962px;top:128.500px;font-size:28px;color:#cbcbcb;-webkit-text-stroke:0.3px">Arrange</div>
<div class="t" style="left:1091px;top:128.500px;font-size:28px;color:#cbcbcb;-webkit-text-stroke:0.3px">Extras</div>
<div class="a" style="left:696px;top:174px;width:2782px;height:2px;background:#525b5f"></div>
<div class="a" style="left:696px;top:250px;width:2782px;height:2px;background:#525b5f"></div>
<svg style="left:720px;top:196px" width="34" height="34"><rect x="1" y="1" width="32" height="32" fill="none" stroke="#fff" stroke-width="2"/><path d="M1 9.500H33M20 9.500V33" stroke="#fff" stroke-width="2"/><rect x="21" y="10.500" width="11" height="21.500" fill="#555"/></svg>
<svg style="left:765px;top:210px" width="18" height="9"><path d="M0 0H18L9 9Z" fill="#5c5c5c"/></svg>
<div class="a" style="left:808px;top:194px;width:2px;height:40px;background:#525b5f"></div>
<div class="t" style="left:839px;top:200.500px;font-size:28px;color:#d0d0d0;-webkit-text-stroke:0.3px">100%</div>
<svg style="left:923px;top:210px" width="18" height="9"><path d="M0 0H18L9 9Z" fill="#5c5c5c"/></svg>
<div class="a" style="left:966px;top:194px;width:2px;height:40px;background:#525b5f"></div>
<svg style="left:998px;top:199px" width="30" height="30" fill="none" stroke="#acacac"><circle cx="10.500" cy="10.500" r="8.500" stroke-width="3"/><path d="M16.500 17L27 27.500" stroke-width="4.500"/><path d="M10.500 6V15M6 10.500H15" stroke-width="2.200"/></svg>
<svg style="left:1058px;top:199px" width="30" height="30" fill="none" stroke="#acacac"><circle cx="10.500" cy="10.500" r="8.500" stroke-width="3"/><path d="M16.500 17L27 27.500" stroke-width="4.500"/><path d="M6 10.500H15" stroke-width="2.200"/></svg>
<div class="a" style="left:1112px;top:194px;width:2px;height:40px;background:#525b5f"></div>
<svg style="left:1141px;top:205px" width="32" height="18"><path d="M1 4V16.500H13L8.500 12C13 7 23 6.500 30.500 14.500C25 3 12 0.500 5 8.500Z" fill="#acacac"/></svg>
<svg style="left:1201px;top:205px" width="32" height="18"><path d="M31 4V16.500H19L23.500 12C19 7 9 6.500 1.500 14.500C7 3 20 0.500 27 8.500Z" fill="#5e5e5e"/></svg>
<div class="a" style="left:1258px;top:194px;width:2px;height:40px;background:#525b5f"></div>
<svg style="left:1289px;top:198px" width="30" height="31"><path d="M10 0.500H20V3H29V6.500H1V3H10Z" fill="#acacac"/><rect x="4.500" y="9" width="21" height="21.500" fill="#acacac"/></svg>
<div class="a" style="left:1344px;top:194px;width:2px;height:40px;background:#525b5f"></div>
<svg style="left:1373px;top:197px" width="32" height="32" fill="none" stroke="#acacac" stroke-width="2"><rect x="7.500" y="7.500" width="17" height="17" fill="#acacac" stroke="none"/><path d="M15 2H2V15"/><path d="M17 30H30V17"/></svg>
<svg style="left:1433px;top:197px" width="32" height="32" fill="none" stroke="#acacac" stroke-width="2"><rect x="8" y="8" width="16" height="16" fill="#acacac" stroke="none"/><rect x="2" y="2" width="12" height="12" fill="#2a2a2a"/><rect x="18" y="18" width="12" height="12" fill="#2a2a2a"/></svg>
<div class="a" style="left:1490px;top:194px;width:2px;height:40px;background:#525b5f"></div>
<svg style="left:1518px;top:195px" width="36" height="32"><path d="M3 2L12 11" stroke="#acacac" stroke-width="2"/><path d="M13.500 5.500L27 19L14 29L2.500 17.500Z" fill="none" stroke="#acacac" stroke-width="2.500"/><path d="M3.500 17.500H26.500L14 28Z" fill="#acacac"/><path d="M30 19C32.500 22.500 34 24.500 34 26.500A4 4 0 0 1 26 26.500C26 24.500 27.500 22.500 30 19Z" fill="#8a8a8a"/></svg>
<svg style="left:1574px;top:195px" width="44" height="38"><rect x="0" y="31" width="42" height="6" fill="#acacac"/><path d="M8.500 27L9.500 19L24 3.500C26 1.500 29 1 31.500 3.500C34 6 34 8.500 31.500 11L17.500 26.500Z" fill="#acacac"/><path d="M19 25.500H36" stroke="#7a7a7a" stroke-width="2"/></svg>
<svg style="left:1641px;top:201px" width="32" height="28"><rect x="7" y="7" width="24" height="20" fill="#6a6a6a"/><rect x="2" y="2" width="24" height="20" fill="#2a2a2a" stroke="#acacac" stroke-width="3.500"/></svg>
<div class="a" style="left:1696px;top:194px;width:2px;height:40px;background:#525b5f"></div>
<svg style="left:1725px;top:205px" width="32" height="18"><path d="M0 9H26" stroke="#acacac" stroke-width="2"/><path d="M24 3.500L31.500 9L24 14.500Z" fill="#acacac"/></svg>
<svg style="left:1767px;top:210px" width="18" height="9"><path d="M0 0H18L9 9Z" fill="#5c5c5c"/></svg>
<svg style="left:1812px;top:199px" width="34" height="32" fill="none" stroke="#acacac" stroke-width="2"><path d="M4 24V16.500H28V9"/><rect x="1.500" y="25" width="5" height="5" stroke-width="2"/><rect x="25.500" y="2" width="5" height="5" stroke-width="2"/></svg>
<svg style="left:1855px;top:210px" width="18" height="9"><path d="M0 0H18L9 9Z" fill="#5c5c5c"/></svg>
<div class="a" style="left:1898px;top:194px;width:2px;height:40px;background:#525b5f"></div>
<svg style="left:1928px;top:200px" width="27" height="27"><path d="M10 0H17V10H27V17H17V27H10V17H0V10H10Z" fill="#fff"/></svg>
<svg style="left:1969px;top:210px" width="18" height="9"><path d="M0 0H18L9 9Z" fill="#5c5c5c"/></svg>
<div class="a" style="left:2012px;top:194px;width:2px;height:40px;background:#525b5f"></div>
<svg style="left:2038px;top:200px" width="27" height="27" fill="none" stroke="#acacac" stroke-width="2"><rect x="1" y="1" width="25" height="25"/><path d="M9.500 1V26M17.500 1V26M1 9.500H26M1 17.500H26"/></svg>
<svg style="left:2079px;top:210px" width="18" height="9"><path d="M0 0H18L9 9Z" fill="#5c5c5c"/></svg>
<svg style="left:3380px;top:200px" width="24" height="24" fill="none" stroke="#acacac" stroke-width="3.600"><path d="M1.800 8V1.800H8M16 1.800H22.200V8M22.200 16V22.200H16M8 22.200H1.800V16"/><rect x="8" y="8" width="8" height="8" fill="#acacac" stroke="none"/></svg>
<svg style="left:3421px;top:202px" width="21" height="20"><rect x="1" y="1" width="18.500" height="18" fill="none" stroke="#acacac" stroke-width="2"/><rect x="13.500" y="2" width="5" height="16" fill="#7c7c7c"/></svg>
<div class="a" style="left:1120px;top:252px;width:2px;height:1196px;background:#525b5f"></div>
<div class="a" style="left:1138px;top:252px;width:2px;height:1196px;background:#525b5f"></div>
<div class="a" style="left:1126px;top:843px;width:8px;height:14px;background:linear-gradient(90deg,#f4f4f4 0,#f4f4f4 25%,#8a8a8a 45%,#e8e8e8 65%,#e0e0e0 85%,#9a9a9a 100%)"></div>
<div class="a" style="left:712px;top:284px;width:392px;height:58px;border:2px solid #ffffff;border-radius:9px;background:#2a2a2a"></div>
<div class="t" style="left:726px;top:302px;font-size:24.500px;color:#a5a5a5">Search Shapes</div>
<svg style="left:1067px;top:300px" width="26" height="26" fill="none" stroke="#7d7d7d"><circle cx="9.500" cy="9.500" r="7" stroke-width="3.500"/><path d="M15 15L23 23" stroke-width="4.500"/></svg>
<div class="a" style="left:696px;top:378px;width:424px;height:2px;background:#525b5f"></div>
<svg style="left:699.500px;top:408px" width="16" height="9"><path d="M0 0H16L8 9Z" fill="#8e8e8e"/></svg>
<div class="t" style="left:724px;top:400px;font-size:26px;color:#d0d0d0;-webkit-text-stroke:0.3px">Scratchpad</div>
<div class="t" style="left:990px;top:401px;font-size:25px;color:#c0c0c0">?</div>
<svg style="left:1014px;top:403px" width="20" height="20"><path d="M10 0V20M0 10H20" stroke="#666" stroke-width="3.500"/></svg>
<svg style="left:1045px;top:400px" width="24" height="24"><path d="M2 22L4 14L15 3C17 1 19 1 21 3C23 5 23 7 21 9L10 20Z" fill="#555"/></svg>
<svg style="left:1080px;top:404px" width="18" height="18"><path d="M1.500 1.500L16.500 16.500M16.500 1.500L1.500 16.500" stroke="#7b93b3" stroke-width="3.500"/></svg>
<div class="a" style="left:696px;top:448px;width:424px;height:2px;background:#525b5f"></div>
<svg style="left:726px;top:472px" width="374" height="66"><rect x="4" y="4.500" width="364" height="57" rx="15" fill="none" stroke="#c4c4c4" stroke-width="4" stroke-dasharray="4 4"/></svg>
<div class="t" style="left:729px;top:491.500px;width:367px;text-align:center;font-size:26px;color:#b4b4b4">Drag elements here</div>
<div class="a" style="left:696px;top:560px;width:424px;height:2px;background:#525b5f"></div>
<svg style="left:704px;top:587px" width="9" height="16"><path d="M0 0V16L9 8Z" fill="#acacac"/></svg>
<div class="t" style="left:724px;top:582px;font-size:26px;color:#d0d0d0;-webkit-text-stroke:0.3px">General</div>
<svg style="left:704px;top:657px" width="9" height="16"><path d="M0 0V16L9 8Z" fill="#acacac"/></svg>
<div class="t" style="left:724px;top:652px;font-size:26px;color:#d0d0d0;-webkit-text-stroke:0.3px">Misc</div>
<svg style="left:704px;top:727px" width="9" height="16"><path d="M0 0V16L9 8Z" fill="#acacac"/></svg>
<div class="t" style="left:724px;top:722px;font-size:26px;color:#d0d0d0;-webkit-text-stroke:0.3px">Advanced</div>
<div class="a" style="left:696px;top:630px;width:424px;height:2px;background:#525b5f"></div>
<div class="a" style="left:696px;top:700px;width:424px;height:2px;background:#525b5f"></div>
<div class="a" style="left:696px;top:770px;width:424px;height:2px;background:#525b5f"></div>
<div class="a" style="left:696px;top:1369px;width:424px;height:2px;background:#525b5f"></div>
<svg style="left:725px;top:1400px" width="20" height="20"><path d="M7.500 0H12.500V7.500H20V12.500H12.500V20H7.500V12.500H0V7.500H7.500Z" fill="#e8730f"/></svg>
<div class="t" style="left:755px;top:1397.500px;font-size:26px;font-weight:700;color:#e8730f">More Shapes...</div>
<div class="a" style="left:1140px;top:1369px;width:1856px;height:2px;background:#525b5f"></div>
<div class="a" style="left:1196px;top:1371px;width:2px;height:77px;background:#525b5f"></div>
<div class="a" style="left:1472px;top:1371px;width:2px;height:77px;background:#525b5f"></div>
<div class="a" style="left:1750px;top:1371px;width:2px;height:77px;background:#525b5f"></div>
<div class="a" style="left:1808px;top:1371px;width:2px;height:77px;background:#525b5f"></div>
<svg style="left:1165px;top:1397px" width="8" height="28"><rect x="1" y="1" width="6" height="6" fill="#a0a0a0"/><rect x="1" y="11" width="6" height="6" fill="#a0a0a0"/><rect x="1" y="21" width="6" height="6" fill="#a0a0a0"/></svg>
<div class="a" style="left:1198px;top:1442px;width:274px;height:6px;background:#e8730f"></div>
<div class="t" style="left:1197px;top:1398px;width:274px;text-align:center;font-size:26px;font-weight:700;color:#1c8c40">complex gitflow</div>
<div class="t" style="left:1473px;top:1398px;width:276px;text-align:center;font-size:26px;color:#8e8e8e">simple gitflow</div>
<svg style="left:1768px;top:1396px" width="26" height="26"><path d="M10 0H16V10H26V16H16V26H10V16H0V10H10Z" fill="#a8a8a8"/></svg>
<div class="a" style="left:1140px;top:254px;width:1830px;height:2px;background:#525b5f"></div>
<svg style="left:1140px;top:256px" width="1830" height="1088" viewBox="1140 256 1830 1088">
<defs><pattern id="gmin" x="1172.600" y="324.500" width="20" height="20" patternUnits="userSpaceOnUse"><path d="M0 10H20M10 0V20" stroke="#2e2e2e" stroke-width="3.600" fill="none"/><path d="M0 10H20M10 0V20" stroke="#323232" stroke-width="1.800" fill="none"/></pattern><pattern id="gmaj" x="1143.200" y="295.100" width="80" height="80" patternUnits="userSpaceOnUse"><path d="M0 40H80M40 0V80" stroke="#383838" stroke-width="2.600" fill="none"/><path d="M0 40H80M40 0V80" stroke="#515151" stroke-width="1.300" fill="none"/></pattern><clipPath id="cv"><rect x="1140" y="256" width="1830" height="1088"/></clipPath></defs>
<g clip-path="url(#cv)">
<rect x="1140" y="256" width="1830" height="1088" fill="#2a2a2a"/>
<rect x="1140" y="256" width="1830" height="1088" fill="url(#gmin)"/>
<rect x="1140" y="256" width="1830" height="1088" fill="url(#gmaj)"/>
<path d="M2803 255.400V1344" stroke="#dadada" stroke-width="2" stroke-dasharray="5.500 6.500" fill="none"/>
<path d="M1203 395H2383" stroke="#6c8ebf" stroke-width="2" stroke-dasharray="6 6" fill="none"/>
<path d="M2423 395H2543" stroke="#6c8ebf" stroke-width="2" stroke-dasharray="6 6" fill="none"/>
<path d="M2583 395H2743" stroke="#6c8ebf" stroke-width="2" stroke-dasharray="6 6" fill="none"/>
<path d="M1183 415V595Q1183 615 1203 615H1263" stroke="#82b366" stroke-width="2" stroke-dasharray="6 6" fill="none"/>
<path d="M1303 615H1437" stroke="#82b366" stroke-width="2" stroke-dasharray="6 6" fill="none"/>
<path d="M1477 615H1643" stroke="#82b366" stroke-width="2" stroke-dasharray="6 6" fill="none"/>
<path d="M1683 615H1883" stroke="#82b366" stroke-width="2" stroke-dasharray="6 6" fill="none"/>
<path d="M1923 615H2433" stroke="#82b366" stroke-width="2" stroke-dasharray="6 6" fill="none"/>
<path d="M2473 615H2603" stroke="#82b366" stroke-width="2" stroke-dasharray="6 6" fill="none"/>
<path d="M2643 615H2743" stroke="#82b366" stroke-width="2" stroke-dasharray="6 6" fill="none"/>
<path d="M2403 415V595Q2403 615 2423 615H2433" stroke="#82b366" stroke-width="2" stroke-dasharray="6 6" fill="none"/>
<path d="M2563 415V595Q2563 615 2583 615H2603" stroke="#82b366" stroke-width="2" stroke-dasharray="6 6" fill="none"/>
<path d="M1903 595V529Q1903 515 1917 515H1933" stroke="#d79b00" stroke-width="2" stroke-dasharray="6 6" fill="none"/>
<path d="M1973 515H2143" stroke="#d79b00" stroke-width="2" stroke-dasharray="6 6" fill="none"/>
<path d="M2183 515H2303" stroke="#d79b00" stroke-width="2" stroke-dasharray="6 6" fill="none"/>
<path d="M2343 515Q2363 515 2363 495V415Q2363 395 2383 395" stroke="#d79b00" stroke-width="2" stroke-dasharray="6 6" fill="none"/>
<path d="M1953 535V545Q1953 555 1963 555H1973" stroke="#d79b00" stroke-width="2" stroke-dasharray="6 6" fill="none"/>
<path d="M2013 555H2083" stroke="#d79b00" stroke-width="2" stroke-dasharray="6 6" fill="none"/>
<path d="M2123 555V526Q2123 515 2134 515H2143" stroke="#d79b00" stroke-width="2" stroke-dasharray="6 6" fill="none"/>
<path d="M2163 535V545Q2163 555 2174 555H2203" stroke="#d79b00" stroke-width="2" stroke-dasharray="6 6" fill="none"/>
<path d="M2243 555H2266Q2283 555 2283 539V524Q2283 515 2292 515H2303" stroke="#d79b00" stroke-width="2" stroke-dasharray="6 6" fill="none"/>
<path d="M2403 415V435Q2403 455 2423 455H2451" stroke="#b85450" stroke-width="2" stroke-dasharray="6 6" fill="none"/>
<path d="M2491 455H2503Q2523 455 2523 435V415Q2523 395 2543 395" stroke="#b85450" stroke-width="2" stroke-dasharray="6 6" fill="none"/>
<path d="M1283 635V655Q1283 675 1303 675H1343" stroke="#9673a6" stroke-width="2" stroke-dasharray="6 6" fill="none"/>
<path d="M1283 635V715Q1283 735 1303 735" stroke="#9673a6" stroke-width="2" stroke-dasharray="6 6" fill="none"/>
<path d="M1383 675H1523" stroke="#9673a6" stroke-width="2" stroke-dasharray="6 6" fill="none"/>
<path d="M1563 675H1583Q1603 675 1603 655V635Q1603 615 1623 615H1643" stroke="#9673a6" stroke-width="2" stroke-dasharray="6 6" fill="none"/>
<path d="M1663 635V715Q1663 735 1683 735" stroke="#9673a6" stroke-width="2" stroke-dasharray="6 6" fill="none"/>
<path d="M1343 735H1683" stroke="#9673a6" stroke-width="2" stroke-dasharray="6 6" fill="none"/>
<path d="M1723 735H1795" stroke="#9673a6" stroke-width="2" stroke-dasharray="6 6" fill="none"/>
<path d="M1835 735H1843Q1863 735 1863 715V635Q1863 615 1883 615" stroke="#9673a6" stroke-width="2" stroke-dasharray="6 6" fill="none"/>
<path d="M2453 635V655Q2453 675 2473 675H2493" stroke="#9673a6" stroke-width="2" stroke-dasharray="6 6" fill="none"/>
<path d="M2453 635V715Q2453 735 2473 735H2493" stroke="#9673a6" stroke-width="2" stroke-dasharray="6 6" fill="none"/>
<path d="M2533 675H2743" stroke="#9673a6" stroke-width="2" stroke-dasharray="6 6" fill="none"/>
<path d="M2533 735H2743" stroke="#9673a6" stroke-width="2" stroke-dasharray="6 6" fill="none"/>
<path d="M1363 695V795Q1363 815 1383 815" stroke="#f0f0f0" stroke-width="2" stroke-dasharray="6 6" fill="none"/>
<path d="M1423 815H1445" stroke="#f0f0f0" stroke-width="2" stroke-dasharray="6 6" fill="none"/>
<path d="M1485 815Q1503 815 1503 797V690Q1503 675 1515 675H1523" stroke="#f0f0f0" stroke-width="2" stroke-dasharray="6 6" fill="none"/>
<path d="M1323 755V855Q1323 875 1343 875H1463" stroke="#f0f0f0" stroke-width="2" stroke-dasharray="6 6" fill="none"/>
<path d="M1503 875H1583" stroke="#f0f0f0" stroke-width="2" stroke-dasharray="6 6" fill="none"/>
<path d="M1623 875H1727" stroke="#f0f0f0" stroke-width="2" stroke-dasharray="6 6" fill="none"/>
<path d="M1767 875Q1783 875 1783 859V750Q1783 735 1791 735H1795" stroke="#f0f0f0" stroke-width="2" stroke-dasharray="6 6" fill="none"/>
<path d="M1703 755V855Q1703 875 1723 875" stroke="#666666" stroke-width="2" stroke-dasharray="6 6" fill="none"/>
<path d="M2513 755V835Q2513 855 2533 855H2553" stroke="#f0f0f0" stroke-width="2" stroke-dasharray="6 6" fill="none"/>
<path d="M2593 855H2743" stroke="#f0f0f0" stroke-width="2" stroke-dasharray="6 6" fill="none"/>
<circle cx="1183" cy="395" r="20" fill="#dae8fc" stroke="#6c8ebf" stroke-width="2"/>
<circle cx="2403" cy="395" r="20" fill="#dae8fc" stroke="#6c8ebf" stroke-width="2"/>
<circle cx="2563" cy="395" r="20" fill="#dae8fc" stroke="#6c8ebf" stroke-width="2"/>
<circle cx="2471" cy="455" r="20" fill="#f8cecc" stroke="#b85450" stroke-width="2"/>
<circle cx="1953" cy="515" r="20" fill="#ffe6cc" stroke="#d79b00" stroke-width="2"/>
<circle cx="2163" cy="515" r="20" fill="#ffe6cc" stroke="#d79b00" stroke-width="2"/>
<circle cx="2323" cy="515" r="20" fill="#ffe6cc" stroke="#d79b00" stroke-width="2"/>
<circle cx="1993" cy="555" r="20" fill="#ffe6cc" stroke="#d79b00" stroke-width="2"/>
<circle cx="2103" cy="555" r="20" fill="#ffe6cc" stroke="#d79b00" stroke-width="2"/>
<circle cx="2223" cy="555" r="20" fill="#ffe6cc" stroke="#d79b00" stroke-width="2"/>
<circle cx="1283" cy="615" r="20" fill="#d5e8d4" stroke="#82b366" stroke-width="2"/>
<circle cx="1457" cy="615" r="20" fill="#d5e8d4" stroke="#82b366" stroke-width="2"/>
<circle cx="1663" cy="615" r="20" fill="#d5e8d4" stroke="#82b366" stroke-width="2"/>
<circle cx="1903" cy="615" r="20" fill="#d5e8d4" stroke="#82b366" stroke-width="2"/>
<circle cx="2453" cy="615" r="20" fill="#d5e8d4" stroke="#82b366" stroke-width="2"/>
<circle cx="2623" cy="615" r="20" fill="#d5e8d4" stroke="#82b366" stroke-width="2"/>
<circle cx="1363" cy="675" r="20" fill="#e1d5e7" stroke="#9673a6" stroke-width="2"/>
<circle cx="1543" cy="675" r="20" fill="#e1d5e7" stroke="#9673a6" stroke-width="2"/>
<circle cx="2513" cy="675" r="20" fill="#e1d5e7" stroke="#9673a6" stroke-width="2"/>
<circle cx="1323" cy="735" r="20" fill="#e1d5e7" stroke="#9673a6" stroke-width="2"/>
<circle cx="1703" cy="735" r="20" fill="#e1d5e7" stroke="#9673a6" stroke-width="2"/>
<circle cx="1815" cy="735" r="20" fill="#e1d5e7" stroke="#9673a6" stroke-width="2"/>
<circle cx="2513" cy="735" r="20" fill="#e1d5e7" stroke="#9673a6" stroke-width="2"/>
<circle cx="1403" cy="815" r="20" fill="#f5f5f5" stroke="#666666" stroke-width="2"/>
<circle cx="1465" cy="815" r="20" fill="#f5f5f5" stroke="#666666" stroke-width="2"/>
<circle cx="1483" cy="875" r="20" fill="#f5f5f5" stroke="#666666" stroke-width="2"/>
<circle cx="1603" cy="875" r="20" fill="#f5f5f5" stroke="#666666" stroke-width="2"/>
<circle cx="1747" cy="875" r="20" fill="#f5f5f5" stroke="#666666" stroke-width="2"/>
<circle cx="2573" cy="855" r="20" fill="#f5f5f5" stroke="#666666" stroke-width="2"/>
<rect x="2743" y="375" width="180" height="40" fill="#dae8fc" stroke="#6c8ebf" stroke-width="2"/>
<text x="2831.800" y="402.6" font-size="24" text-anchor="middle" fill="#000" font-family="Liberation Sans">Master</text>
<rect x="2743" y="435" width="180" height="40" fill="#f8cecc" stroke="#b85450" stroke-width="2"/>
<text x="2831.800" y="462.6" font-size="24" text-anchor="middle" fill="#000" font-family="Liberation Sans">Hotfix</text>
<rect x="2743" y="495" width="180" height="40" fill="#ffe6cc" stroke="#d79b00" stroke-width="2"/>
<text x="2831.800" y="522.6" font-size="24" text-anchor="middle" fill="#000" font-family="Liberation Sans">Release</text>
<rect x="2743" y="535" width="180" height="40" fill="#ffe6cc" stroke="#d79b00" stroke-width="2"/>
<text x="2831.800" y="562.6" font-size="24" text-anchor="middle" fill="#000" font-family="Liberation Sans">Release Fixes</text>
<rect x="2743" y="595" width="180" height="40" fill="#d5e8d4" stroke="#82b366" stroke-width="2"/>
<text x="2831.800" y="622.6" font-size="24" text-anchor="middle" fill="#000" font-family="Liberation Sans">Nightly</text>
<rect x="2743" y="655" width="180" height="40" fill="#e1d5e7" stroke="#9673a6" stroke-width="2"/>
<text x="2831.800" y="682.6" font-size="24" text-anchor="middle" fill="#000" font-family="Liberation Sans">Feature team 1</text>
<rect x="2743" y="715" width="180" height="40" fill="#e1d5e7" stroke="#9673a6" stroke-width="2"/>
<text x="2831.800" y="742.6" font-size="24" text-anchor="middle" fill="#000" font-family="Liberation Sans">Feature team 2</text>
<rect x="2743" y="835" width="180" height="40" fill="#f5f5f5" stroke="#666666" stroke-width="2"/>
<text x="2831.800" y="862.6" font-size="24" text-anchor="middle" fill="#000" font-family="Liberation Sans">Development</text>
<text x="1182" y="364" font-size="24" font-weight="700" text-anchor="middle" fill="#0a6bd6" font-family="Liberation Sans">1.0</text>
<text x="2402" y="364" font-size="24" font-weight="700" text-anchor="middle" fill="#0a6bd6" font-family="Liberation Sans">2.0</text>
<text x="2561" y="364" font-size="24" font-weight="700" text-anchor="middle" fill="#0a6bd6" font-family="Liberation Sans">2.1</text>
<text x="1952" y="486" font-size="20" text-anchor="middle" fill="#ffb570" font-family="Liberation Sans">RC1</text>
<text x="2162" y="486" font-size="20" text-anchor="middle" fill="#ffb570" font-family="Liberation Sans">RC2</text>
<text x="2322" y="486" font-size="20" text-anchor="middle" fill="#ffb570" font-family="Liberation Sans">RC3</text>
<rect x="2743" y="375" width="180" height="40" fill="none" stroke="#00a8ff" stroke-width="2" stroke-dasharray="6 6"/>
<circle cx="2724" cy="356" r="10" fill="#29b6f2" stroke="#fff" stroke-width="2"/>
<circle cx="2724" cy="394" r="10" fill="#29b6f2" stroke="#fff" stroke-width="2"/>
<circle cx="2724" cy="432" r="10" fill="#29b6f2" stroke="#fff" stroke-width="2"/>
<circle cx="2832" cy="356" r="10" fill="#29b6f2" stroke="#fff" stroke-width="2"/>
<circle cx="2832" cy="432" r="10" fill="#29b6f2" stroke="#fff" stroke-width="2"/>
<circle cx="2940" cy="356" r="10" fill="#29b6f2" stroke="#fff" stroke-width="2"/>
<circle cx="2940" cy="394" r="10" fill="#29b6f2" stroke="#fff" stroke-width="2"/>
<circle cx="2940" cy="432" r="10" fill="#29b6f2" stroke="#fff" stroke-width="2"/>
<g transform="translate(2964,332)" fill="none" stroke="#29b6f2" stroke-width="3.5"><path d="M3 -9.500A10 10 0 1 0 9.500 3"/><path d="M-1 -16L7 -9.500L-1 -3Z" fill="#29b6f2" stroke="none"/></g>
</g></svg>
<div class="a" style="left:1620px;top:1350px;width:470px;height:16px;border-radius:8px;background:#525b5f"></div>
<div class="a" style="left:2976px;top:524px;width:16px;height:266px;border-radius:8px;background:#525b5f"></div>
<div class="a" style="left:2996px;top:252px;width:2px;height:1196px;background:#525b5f"></div>
<div class="a" style="left:2998px;top:252px;width:162px;height:68px;background:#000;border-right:2px solid #525b5f;border-bottom:2px solid #525b5f"></div>
<div class="a" style="left:3320px;top:252px;width:158px;height:68px;background:#000;border-left:2px solid #525b5f;border-bottom:2px solid #525b5f"></div>
<div class="t" style="left:2998px;top:269px;width:160px;text-align:center;font-size:26px;font-weight:700;color:#8c8c8c">Style</div>
<div class="t" style="left:3160px;top:271px;width:160px;text-align:center;font-size:26px;font-weight:700;color:#787878">Text</div>
<div class="t" style="left:3322px;top:269px;width:156px;text-align:center;font-size:26px;font-weight:700;color:#8c8c8c">Arrange</div>
<div class="fl" style="left:3034px;top:347px">Font</div>
<div class="a" style="left:3030px;top:390px;width:408px;height:46px;border:2px solid #b4b4b4;border-radius:9px"></div>
<div class="a" style="left:3384px;top:394px;width:2px;height:39px;background:#b4b4b4"></div>
<div class="t" style="left:3042px;top:400px;font-size:24px;color:#7c7c7c">Helvetica</div>
<svg style="left:3398px;top:408px" width="20" height="15"><path d="M0 0H20L10 15Z" fill="#3b4146"/></svg>
<div class="btn" style="left:3030px;top:446px;width:62px;height:58px"></div>
<div class="t" style="left:3030px;top:463.5px;width:62px;text-align:center;font-size:23px;font-weight:700;color:#fff;-webkit-text-stroke:1.200px #fff">B</div>
<div class="btn" style="left:3096px;top:446px;width:62px;height:58px"></div>
<svg style="left:3096px;top:446px" width="62" height="58"><path d="M27 20.200H40.300V22.300H35.200L31.400 36.100H32.400V38.200H20V36.100H25.600L29.400 22.300H27Z" fill="#fff"/></svg>
<div class="btn" style="left:3162px;top:446px;width:62px;height:58px"></div>
<div class="t" style="left:3162px;top:461px;width:61px;text-align:center;font-size:24px;font-weight:700;color:#fff">U</div>
<div class="a" style="left:3182px;top:484px;width:21px;height:2px;background:#fff"></div>
<div class="btn" style="left:3244px;top:446px;width:62px;height:58px"></div>
<svg style="left:3257px;top:459px" width="36" height="32" fill="none" stroke="#fff" stroke-width="2"><path d="M5 31V3M18 31V3M31 31V3"/><path d="M1 7L5 1L9 7ZM14 7L18 1L22 7ZM27 7L31 1L35 7Z" fill="#fff" stroke="none"/></svg>
<div class="inp" style="left:3322px;top:452px;width:92px;height:46px;line-height:42px;word-spacing:3px">12 pt</div>
<div class="spin" style="left:3414px;top:452px;width:24px;height:46px"><i style="position:absolute;left:0;right:0;top:20.0px;height:2px;background:#b0b0b0"></i></div><svg style="left:3420px;top:461.0px" width="12" height="28"><defs><linearGradient id="sg" x1="0" y1="0" x2="0" y2="1"><stop offset="0" stop-color="#d8d8d8"/><stop offset="1" stop-color="#6a6a6a"/></linearGradient></defs><path d="M0 8.500L6 3L12 8.500Z" fill="#b8b8b8"/><path d="M0 19.500L6 25L12 19.500Z" fill="#b8b8b8"/></svg>
<div class="btn" style="left:3030px;top:516px;width:62px;height:58px"></div>
<svg style="left:3046px;top:534px" width="28" height="24"><rect x="0" y="0" width="28" height="2" fill="#fff"/><rect x="0" y="4" width="20" height="2" fill="#fff"/><rect x="0" y="8" width="28" height="2" fill="#fff"/><rect x="0" y="12" width="20" height="2" fill="#fff"/><rect x="0" y="16" width="28" height="2" fill="#fff"/><rect x="0" y="20" width="20" height="2" fill="#fff"/></svg>
<div class="btn on" style="left:3096px;top:516px;width:62px;height:58px"></div>
<svg style="left:3112px;top:534px" width="28" height="24"><rect x="0.0" y="0" width="28" height="2" fill="#fff"/><rect x="4.0" y="4" width="20" height="2" fill="#fff"/><rect x="0.0" y="8" width="28" height="2" fill="#fff"/><rect x="4.0" y="12" width="20" height="2" fill="#fff"/><rect x="0.0" y="16" width="28" height="2" fill="#fff"/><rect x="4.0" y="20" width="20" height="2" fill="#fff"/></svg>
<div class="btn" style="left:3162px;top:516px;width:62px;height:58px"></div>
<svg style="left:3178px;top:534px" width="28" height="24"><rect x="0" y="0" width="28" height="2" fill="#fff"/><rect x="8" y="4" width="20" height="2" fill="#fff"/><rect x="0" y="8" width="28" height="2" fill="#fff"/><rect x="8" y="12" width="20" height="2" fill="#fff"/><rect x="0" y="16" width="28" height="2" fill="#fff"/><rect x="8" y="20" width="20" height="2" fill="#fff"/></svg>
<div class="btn" style="left:3244px;top:516px;width:62px;height:58px"></div>
<svg style="left:3258px;top:529px" width="33" height="30"><rect x="0" y="0" width="33" height="2" fill="#fff"/><rect x="14.500" y="10" width="4" height="19" fill="#fff"/><path d="M10.500 12L16.500 6L22.500 12Z" fill="#fff"/></svg>
<div class="btn on" style="left:3310px;top:516px;width:62px;height:58px"></div>
<svg style="left:3324px;top:523px" width="33" height="44"><rect x="0" y="20" width="33" height="2" fill="#fff"/><rect x="14.500" y="0" width="4" height="11" fill="#fff"/><path d="M10.500 10L16.500 16L22.500 10Z" fill="#fff"/><rect x="14.500" y="31" width="4" height="12" fill="#fff"/><path d="M10.500 32L16.500 26L22.500 32Z" fill="#fff"/></svg>
<div class="btn" style="left:3376px;top:516px;width:62px;height:58px"></div>
<svg style="left:3390px;top:531px" width="33" height="30"><rect x="0" y="27" width="33" height="2" fill="#fff"/><rect x="14.500" y="0" width="4" height="19" fill="#fff"/><path d="M10.500 17L16.500 23L22.500 17Z" fill="#fff"/></svg>
<div class="t" style="left:3034px;top:594px;font-size:24px;color:#d2d2d2">Position</div>
<div class="sel" style="left:3244px;top:588px;width:194px;height:40px"><span>Center</span></div><svg style="left:3413px;top:597px" width="11" height="22"><path d="M0 7.500L5.500 0L11 7.500Z" fill="#c8c8c8"/><path d="M0 14L5.500 21.500L11 14Z" fill="#c8c8c8"/></svg>
<div class="t" style="left:3034px;top:638px;font-size:24px;color:#d2d2d2">Writing Direction</div>
<div class="sel" style="left:3244px;top:632px;width:194px;height:40px"><span>Automatic</span></div><svg style="left:3413px;top:641px" width="11" height="22"><path d="M0 7.500L5.500 0L11 7.500Z" fill="#c8c8c8"/><path d="M0 14L5.500 21.500L11 14Z" fill="#c8c8c8"/></svg>
<div class="a" style="left:2998px;top:688px;width:480px;height:2px;background:#c0c0c0"></div>
<div class="cb on" style="left:3034px;top:716px"></div><svg style="left:3034px;top:716px" width="24" height="24"><path d="M5.500 12.500L10 17.500L19 6.500" stroke="#fff" stroke-width="3.200" fill="none" stroke-linecap="round" stroke-linejoin="round"/></svg>
<div class="fl" style="left:3070px;top:716px;color:#707070">Font Color</div>
<div class="a" style="left:3346px;top:706px;width:92px;height:44px;border:2px solid #525b5f;border-radius:8px"></div>
<div class="a" style="left:3353px;top:713px;width:78px;height:29px;background:#1a1a1a;border:2px solid #000"></div>
<div class="cb off" style="left:3034px;top:766px"></div>
<div class="fl" style="left:3070px;top:766px;color:#707070">Background Color</div>
<div class="cb off" style="left:3034px;top:816px"></div>
<div class="fl" style="left:3070px;top:816px;color:#707070">Border Color</div>
<div class="a" style="left:2998px;top:864px;width:480px;height:2px;background:#525b5f"></div>
<div class="cb on" style="left:3034px;top:884px"></div><svg style="left:3034px;top:884px" width="24" height="24"><path d="M5.500 12.500L10 17.500L19 6.500" stroke="#fff" stroke-width="3.200" fill="none" stroke-linecap="round" stroke-linejoin="round"/></svg>
<div class="fl" style="left:3070px;top:885px;color:#707070">Word Wrap</div>
<div class="cb on" style="left:3034px;top:933px"></div><svg style="left:3034px;top:933px" width="24" height="24"><path d="M5.500 12.500L10 17.500L19 6.500" stroke="#fff" stroke-width="3.200" fill="none" stroke-linecap="round" stroke-linejoin="round"/></svg>
<div class="fl" style="left:3070px;top:934px;color:#707070">Formatted Text</div>
<div class="a" style="left:2998px;top:978px;width:480px;height:2px;background:#525b5f"></div>
<div class="fl" style="left:3034px;top:1002px;color:#707070">Opacity</div>
<div class="inp" style="left:3315px;top:996px;width:99px;height:42px;line-height:38px;word-spacing:3px">100 %</div>
<div class="spin" style="left:3414px;top:996px;width:24px;height:37px"><i style="position:absolute;left:0;right:0;top:15.5px;height:2px;background:#b0b0b0"></i></div><svg style="left:3420px;top:1000.5px" width="12" height="28"><defs><linearGradient id="sg" x1="0" y1="0" x2="0" y2="1"><stop offset="0" stop-color="#d8d8d8"/><stop offset="1" stop-color="#6a6a6a"/></linearGradient></defs><path d="M0 8.500L6 3L12 8.500Z" fill="#b8b8b8"/><path d="M0 19.500L6 25L12 19.500Z" fill="#b8b8b8"/></svg>
<div class="a" style="left:2998px;top:1048px;width:480px;height:2px;background:#525b5f"></div>
<div class="fl" style="left:3034px;top:1072px;color:#707070">Spacing</div>
<div class="inp" style="left:3172px;top:1066px;width:100px;height:42px;line-height:38px;word-spacing:3px">0 pt</div>
<div class="spin" style="left:3272px;top:1066px;width:24px;height:37px"><i style="position:absolute;left:0;right:0;top:15.5px;height:2px;background:#b0b0b0"></i></div><svg style="left:3278px;top:1070.5px" width="12" height="28"><defs><linearGradient id="sg" x1="0" y1="0" x2="0" y2="1"><stop offset="0" stop-color="#d8d8d8"/><stop offset="1" stop-color="#6a6a6a"/></linearGradient></defs><path d="M0 8.500L6 3L12 8.500Z" fill="#b8b8b8"/><path d="M0 19.500L6 25L12 19.500Z" fill="#b8b8b8"/></svg>
<div class="inp" style="left:3315px;top:1066px;width:99px;height:42px;line-height:38px;word-spacing:3px">2 pt</div>
<div class="spin" style="left:3414px;top:1066px;width:24px;height:37px"><i style="position:absolute;left:0;right:0;top:15.5px;height:2px;background:#b0b0b0"></i></div><svg style="left:3420px;top:1070.5px" width="12" height="28"><defs><linearGradient id="sg" x1="0" y1="0" x2="0" y2="1"><stop offset="0" stop-color="#d8d8d8"/><stop offset="1" stop-color="#6a6a6a"/></linearGradient></defs><path d="M0 8.500L6 3L12 8.500Z" fill="#b8b8b8"/><path d="M0 19.500L6 25L12 19.500Z" fill="#b8b8b8"/></svg>
<div class="t" style="left:3172px;top:1112px;width:126px;text-align:center;font-size:24px;color:#707070">Top</div>
<div class="t" style="left:3315px;top:1112px;width:123px;text-align:center;font-size:24px;color:#707070">Global</div>
<div class="inp" style="left:3030px;top:1150px;width:100px;height:42px;line-height:38px;word-spacing:3px">0 pt</div>
<div class="spin" style="left:3130px;top:1150px;width:24px;height:37px"><i style="position:absolute;left:0;right:0;top:15.5px;height:2px;background:#b0b0b0"></i></div><svg style="left:3136px;top:1154.5px" width="12" height="28"><defs><linearGradient id="sg" x1="0" y1="0" x2="0" y2="1"><stop offset="0" stop-color="#d8d8d8"/><stop offset="1" stop-color="#6a6a6a"/></linearGradient></defs><path d="M0 8.500L6 3L12 8.500Z" fill="#b8b8b8"/><path d="M0 19.500L6 25L12 19.500Z" fill="#b8b8b8"/></svg>
<div class="inp" style="left:3172px;top:1150px;width:100px;height:42px;line-height:38px;word-spacing:3px">0 pt</div>
<div class="spin" style="left:3272px;top:1150px;width:24px;height:37px"><i style="position:absolute;left:0;right:0;top:15.5px;height:2px;background:#b0b0b0"></i></div><svg style="left:3278px;top:1154.5px" width="12" height="28"><defs><linearGradient id="sg" x1="0" y1="0" x2="0" y2="1"><stop offset="0" stop-color="#d8d8d8"/><stop offset="1" stop-color="#6a6a6a"/></linearGradient></defs><path d="M0 8.500L6 3L12 8.500Z" fill="#b8b8b8"/><path d="M0 19.500L6 25L12 19.500Z" fill="#b8b8b8"/></svg>
<div class="inp" style="left:3315px;top:1150px;width:99px;height:42px;line-height:38px;word-spacing:3px">0 pt</div>
<div class="spin" style="left:3414px;top:1150px;width:24px;height:37px"><i style="position:absolute;left:0;right:0;top:15.5px;height:2px;background:#b0b0b0"></i></div><svg style="left:3420px;top:1154.5px" width="12" height="28"><defs><linearGradient id="sg" x1="0" y1="0" x2="0" y2="1"><stop offset="0" stop-color="#d8d8d8"/><stop offset="1" stop-color="#6a6a6a"/></linearGradient></defs><path d="M0 8.500L6 3L12 8.500Z" fill="#b8b8b8"/><path d="M0 19.500L6 25L12 19.500Z" fill="#b8b8b8"/></svg>
<div class="t" style="left:3030px;top:1196px;width:124px;text-align:center;font-size:24px;color:#707070">Left</div>
<div class="t" style="left:3172px;top:1196px;width:126px;text-align:center;font-size:24px;color:#707070">Bottom</div>
<div class="t" style="left:3315px;top:1196px;width:123px;text-align:center;font-size:24px;color:#707070">Right</div>
<div class="a" style="left:2998px;top:1238px;width:480px;height:2px;background:#525b5f"></div>
<div class="a" style="left:3476px;top:1px;width:2px;height:1447px;background:#505050"></div>
<div class="a" style="left:0;top:1448px;width:158px;height:44px;background:#16825d"></div>
<svg style="left:24px;top:1456px" width="22" height="28" fill="none" stroke="#fff" stroke-width="1.800"><path d="M1.200 9.300L9.400 17L1.200 24.900"/><path d="M18.300 2.300L10.500 9.900L18.300 17.500"/></svg>
<div style="position:absolute;white-space:pre;line-height:44px;top:1447.500px;font-size:24px;color:#fff;letter-spacing:0.8px;-webkit-text-stroke:0.650px;left:56px">GitHub</div>
<svg style="left:176px;top:1456px" width="24" height="28" fill="none" stroke="#fff" stroke-width="2.200"><circle cx="6" cy="5" r="3.500"/><circle cx="6" cy="23" r="3.500"/><circle cx="18" cy="8" r="3.500"/><path d="M6 8.500V19.500"/><path d="M18 11.500C18 16 6 14 6 19.500"/></svg>
<div style="position:absolute;white-space:pre;line-height:44px;top:1447.500px;font-size:24px;color:#fff;letter-spacing:0.8px;-webkit-text-stroke:0.650px;left:210px">master*</div>
<svg style="left:334px;top:1456px" width="30" height="28" fill="none" stroke="#fff" stroke-width="2.200"><path d="M4 13A11 10 0 0 1 24.500 9"/><path d="M26 15A11 10 0 0 1 5.500 19"/><path d="M25.500 2.500V9.500H18.500"/><path d="M4.500 25.500V18.500H11.500"/></svg>
<svg style="left:396px;top:1458px" width="26" height="26" fill="none" stroke="#fff" stroke-width="2.200"><circle cx="13" cy="13" r="11"/><path d="M8.500 8.500L17.500 17.500M17.500 8.500L8.500 17.500"/></svg>
<div style="position:absolute;white-space:pre;line-height:44px;top:1447.500px;font-size:24px;color:#fff;letter-spacing:0.8px;-webkit-text-stroke:0.650px;left:431px">0</div>
<svg style="left:455px;top:1458px" width="26" height="26" fill="none" stroke="#fff" stroke-width="2.200"><path d="M13 2.500L24.500 23.500H1.500Z" stroke-linejoin="round"/><path d="M13 10V17M13 19V21.500"/></svg>
<div style="position:absolute;white-space:pre;line-height:44px;top:1447.500px;font-size:24px;color:#fff;letter-spacing:0.8px;-webkit-text-stroke:0.650px;left:490px">0</div>
<svg style="left:537px;top:1459px" width="28" height="24" fill="none" stroke="#fff" stroke-width="2.200"><rect x="1.500" y="3" width="16" height="11" rx="5.500"/><rect x="10" y="10" width="16" height="11" rx="5.500"/></svg>
<svg style="left:571px;top:1462px" width="16" height="16" fill="none" stroke="#fff" stroke-width="2.400"><circle cx="8" cy="8" r="5.800"/></svg>
<div style="position:absolute;white-space:pre;line-height:44px;top:1447.500px;font-size:24px;color:#fff;letter-spacing:0.8px;-webkit-text-stroke:0.650px;left:601px">Code Link</div>
<div style="position:absolute;white-space:pre;line-height:44px;top:1447.500px;font-size:24px;color:#fff;letter-spacing:0.8px;-webkit-text-stroke:0.650px;left:3006px">Layout: U.S.</div>
<div style="position:absolute;white-space:pre;line-height:44px;top:1447.500px;font-size:24px;color:#fff;letter-spacing:0.8px;-webkit-text-stroke:0.650px;left:3180px">Theme: dark</div>
<svg style="left:3360px;top:1457px" width="28" height="26" fill="none" stroke="#fff" stroke-width="2"><path d="M10 2H26V14H20L16 18V14"/><circle cx="8" cy="11" r="4"/><path d="M1 24C1 19 4 17 8 17S15 19 15 24"/></svg>
<svg style="left:3421px;top:1457px" width="26" height="28" fill="none" stroke="#fff" stroke-width="2.200"><path d="M3 21V19L5 17V11A8 8 0 0 1 21 11V17L23 19V21Z" stroke-linejoin="round"/><path d="M10 22A3 3 0 0 0 16 22"/></svg>
<div class="a" style="left:0;top:1490px;width:158px;height:2px;background:#5ba88c"></div><div class="a" style="left:158px;top:1490px;width:3320px;height:2px;background:#4f9bd6"></div><div class="a" style="left:0;top:1448px;width:2px;height:44px;background:#5ba88c"></div><div class="a" style="left:3476px;top:1448px;width:2px;height:44px;background:#4f9bd6"></div>
<svg style="left:0;top:1472px" width="20" height="20"><path d="M0 0V20H20A20 20 0 0 1 0 0Z" fill="#14141c"/><path d="M1 0A19 19 0 0 0 20 19" stroke="#5ba88c" stroke-width="2" fill="none"/></svg>
<svg style="left:3458px;top:1472px" width="20" height="20"><path d="M20 0V20H0A20 20 0 0 0 20 0Z" fill="#14141c"/><path d="M19 0A19 19 0 0 1 0 19" stroke="#4f9bd6" stroke-width="2" fill="none"/></svg>
<div class="a" style="left:0;top:0;width:3478px;height:1px;background:#000"></div><div class="a" style="left:0;top:1px;width:3478px;height:1px;background:rgba(0,0,0,0.35)"></div>
</body></html>
